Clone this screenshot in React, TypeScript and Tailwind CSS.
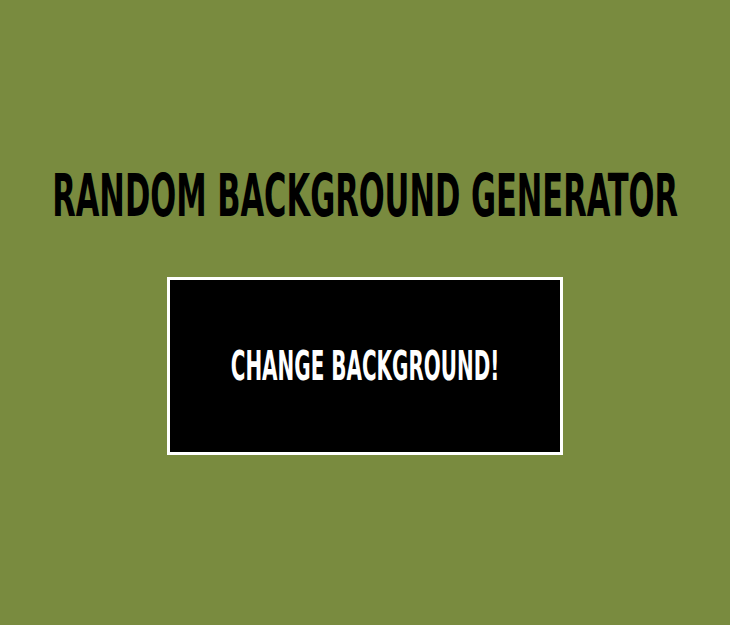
import React, { useState } from 'react';

const colors = ['#798b3f', '#3f6e8b', '#8b3f5e', '#8b6d3f', '#4a3f8b'];

const App = () => {
  const [bg, setBg] = useState(0);

  return (
    <main
      className="min-h-screen w-full overflow-hidden flex flex-col items-center pt-[166px] bg-[#798b3f]"
      style={{ backgroundColor: colors[bg] }}
    >
      <h1 className="inline-block whitespace-nowrap scale-x-[0.575] font-['DejaVu_Sans_Condensed','DejaVu_Sans',sans-serif] font-bold text-[59px] leading-none text-black uppercase">
        Random Background Generator
      </h1>
      <button
        className="mt-[52px] w-[396px] h-[178px] bg-black border-[3px] border-white text-white font-['DejaVu_Sans_Condensed','DejaVu_Sans',sans-serif] font-bold text-[40px] uppercase flex items-center justify-center"
        onClick={() => setBg((bg + 1) % colors.length)}
      >
        <span className="inline-block whitespace-nowrap scale-x-[0.555]">Change Background!</span>
      </button>
    </main>
  );
};

export default App;
